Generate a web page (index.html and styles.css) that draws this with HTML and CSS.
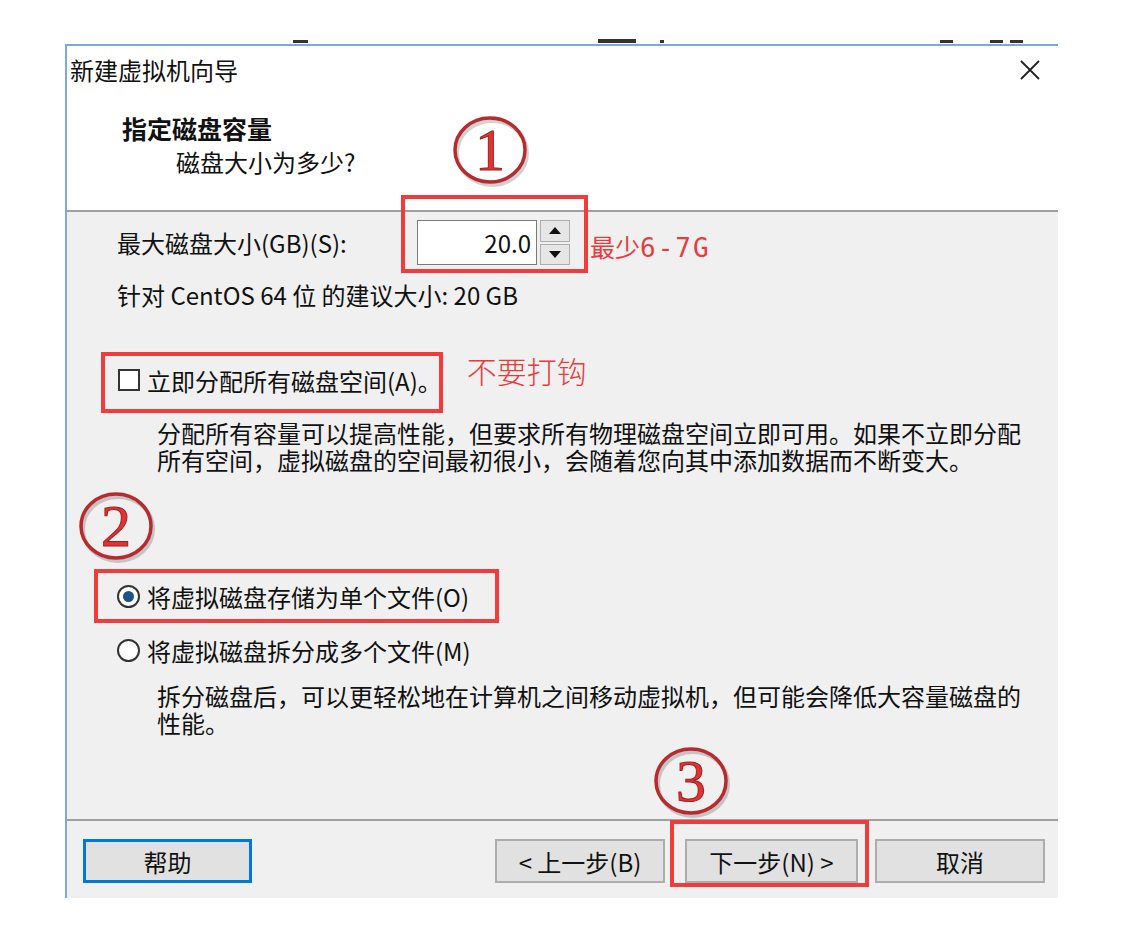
FILE: index.html
```html
<!DOCTYPE html>
<html lang="zh-CN">
<head>
    <meta charset="UTF-8">
    <meta name="viewport" content="width=device-width, initial-scale=1.0">
    <title>新建虚拟机向导</title>
    <link rel="stylesheet" href="styles.css">
</head>
<body>

<div class="backdrop">
    <span class="dash d1"></span>
    <span class="dash d2"></span>
    <span class="dash d3"></span>
    <span class="dash d4"></span>
    <span class="dash d5"></span>
    <span class="dash d6"></span>
</div>

<div class="window">
    <div class="titlebar">
        <span class="title">新建虚拟机向导</span>
        <svg class="close" width="22" height="22" viewBox="0 0 22 22">
            <path d="M2 2 L20 20 M20 2 L2 20" stroke="#222" stroke-width="1.8" fill="none"/>
        </svg>
    </div>

    <div class="header">
        <div class="heading">指定磁盘容量</div>
        <div class="subheading">磁盘大小为多少?</div>
    </div>

    <div class="content">
        <div class="size-row">
            <label class="size-label" for="size">最大磁盘大小(GB)(S):</label>
            <div class="spin">
                <div class="spin-field" id="size">20.0</div>
                <div class="spin-buttons">
                    <span class="spin-btn"><svg width="12" height="7" viewBox="0 0 12 7"><path d="M0 7 L6 0 L12 7Z"/></svg></span>
                    <span class="spin-btn"><svg width="12" height="7" viewBox="0 0 12 7"><path d="M0 0 L12 0 L6 7Z"/></svg></span>
                </div>
            </div>
            <span class="note note-min">最少<span class="mono">6-7G</span></span>
        </div>

        <div class="hint">针对 CentOS 64 位 的建议大小: 20 GB</div>

        <div class="option check-row">
            <span class="checkbox"></span>
            <span>立即分配所有磁盘空间(A)。</span>
            <span class="note note-check">不要打钩</span>
        </div>
        <p class="desc">分配所有容量可以提高性能，但要求所有物理磁盘空间立即可用。如果不立即分配所有空间，虚拟磁盘的空间最初很小，会随着您向其中添加数据而不断变大。</p>

        <div class="option radio-row first">
            <span class="radio checked"></span>
            <span>将虚拟磁盘存储为单个文件(O)</span>
        </div>
        <div class="option radio-row">
            <span class="radio"></span>
            <span>将虚拟磁盘拆分成多个文件(M)</span>
        </div>
        <p class="desc desc-split">拆分磁盘后，可以更轻松地在计算机之间移动虚拟机，但可能会降低大容量磁盘的性能。</p>
    </div>

    <div class="footer">
        <button class="btn btn-help">帮助</button>
        <div class="nav">
            <button class="btn">&lt; 上一步(B)</button>
            <button class="btn btn-next">下一步(N) &gt;</button>
            <button class="btn btn-cancel">取消</button>
        </div>
    </div>

    <!-- red annotations drawn over the dialog -->
    <svg class="circled c1" width="80" height="74" viewBox="0 0 80 74">
        <ellipse cx="41" cy="39" rx="35" ry="32" class="ring-shadow"/>
        <ellipse cx="39" cy="36" rx="35" ry="32" class="ring"/>
        <text x="39" y="56">1</text>
    </svg>
    <svg class="circled c2" width="80" height="74" viewBox="0 0 80 74">
        <ellipse cx="41" cy="39" rx="35" ry="32" class="ring-shadow"/>
        <ellipse cx="39" cy="36" rx="35" ry="32" class="ring"/>
        <text x="39" y="56">2</text>
    </svg>
    <svg class="circled c3" width="80" height="74" viewBox="0 0 80 74">
        <ellipse cx="41" cy="39" rx="35" ry="32" class="ring-shadow"/>
        <ellipse cx="39" cy="36" rx="35" ry="32" class="ring"/>
        <text x="39" y="56">3</text>
    </svg>
    <div class="frame f1"></div>
    <div class="frame f2"></div>
    <div class="frame f3"></div>
    <div class="frame f4"></div>
</div>

</body>
</html>
```

FILE: styles.css
```css
body {
    margin: 0;
    background: #fff;
    font-family: "Noto Sans CJK SC", sans-serif;
    font-size: 24px;
    color: #111;
}
.backdrop {
    height: 44px;
    display: flex;
    align-items: flex-end;
    padding-bottom: 1px;
    box-sizing: border-box;
}
.dash {
    display: block;
    height: 3px;
    width: 13px;
    background: #333;
}
.d1 { margin-left: 293px; width: 15px; }
.d2 { margin-left: 290px; width: 38px; height: 4px; }
.d3 { margin-left: 24px; width: 4px; }
.d4 { margin-left: 276px; }
.d5 { margin-left: 37px; }
.d6 { margin-left: 7px; }

.window {
    position: relative;
    margin-left: 65px;
    width: 991px;
    height: 852px;
    border-top: 2px solid #7ea7dc;
    border-left: 2px solid #7ea7dc;
    background: #f0f0f0;
    display: flex;
    flex-direction: column;
}
.titlebar {
    height: 48px;
    flex: none;
    background: #fff;
    display: flex;
    align-items: center;
    justify-content: space-between;
    padding: 0 17px 0 3px;
}
.title {
    line-height: 30px;
}
.header {
    flex: none;
    height: 97px;
    padding-top: 19px;
    background: #fff;
    border-bottom: 2px solid #a0a0a0;
}
.heading {
    font-size: 25px;
    font-weight: bold;
    line-height: 30px;
    padding-left: 55px;
}
.subheading {
    margin-top: 4px;
    line-height: 30px;
    padding-left: 109px;
}

.content {
    flex: 1;
    padding: 8px 0 0 50px;
}
.size-row {
    display: flex;
    align-items: center;
    height: 45px;
}
.size-label {
    width: 300px;
}
.spin {
    display: flex;
    gap: 3px;
    height: 45px;
}
.spin-field {
    width: 120px;
    box-sizing: border-box;
    border: 1px solid #7a7a7a;
    background: #fff;
    text-align: right;
    padding-right: 5px;
    line-height: 43px;
}
.spin-buttons {
    width: 30px;
    display: flex;
    flex-direction: column;
    gap: 2px;
}
.spin-btn {
    flex: 1;
    border: 1px solid #adadad;
    background: #e6e6e6;
    display: flex;
    align-items: center;
    justify-content: center;
}
.spin-btn svg {
    fill: #111;
}
.note {
    color: #e83c3c;
}
.note-min {
    margin-left: 20px;
    margin-top: 6px;
    font-size: 25px;
}
.mono {
    font-family: "DejaVu Sans Mono", monospace;
    font-size: 26px;
    letter-spacing: 2px;
}
.hint {
    margin-top: 15px;
    line-height: 30px;
}
.option {
    display: flex;
    align-items: center;
    gap: 7px;
    height: 30px;
}
.check-row {
    margin-top: 55px;
}
.checkbox {
    width: 22px;
    height: 22px;
    box-sizing: border-box;
    margin-left: 1px;
    border: 2px solid #333;
    background: #fff;
}
.note-check {
    align-self: flex-start;
    margin-top: -10px;
    margin-left: 18px;
    font-size: 30px;
    font-weight: 300;
    line-height: 30px;
}
.desc {
    margin: 24px 0 0 40px;
    max-width: 875px;
    line-height: 27px;
}
.radio-row {
    margin-top: 24px;
}
.radio-row.first {
    margin-top: 108px;
}
.radio {
    width: 23px;
    height: 23px;
    box-sizing: border-box;
    border: 2px solid #333;
    border-radius: 50%;
    background: #fff;
    display: flex;
    align-items: center;
    justify-content: center;
}
.radio.checked::after {
    content: "";
    width: 11px;
    height: 11px;
    border-radius: 50%;
    background: #1f5189;
}
.desc-split {
    margin-top: 17px;
}

.footer {
    flex: none;
    height: 79px;
    box-sizing: border-box;
    border-top: 2px solid #a0a0a0;
    padding: 18px 13px 0 16px;
    display: flex;
    align-items: flex-start;
}
.nav {
    margin-left: auto;
    display: flex;
    gap: 20px;
}
.btn {
    width: 170px;
    height: 44px;
    border: 2px solid #adadad;
    background: #e1e1e1;
    font-family: inherit;
    font-size: 24px;
    color: #111;
    padding: 0;
}
.btn-help {
    width: 169px;
    border: 3px solid #0078d7;
}
.btn-next {
    width: 173px;
}
.btn-cancel {
    margin-left: -3px;
}

.circled {
    position: absolute;
}
.circled .ring {
    fill: none;
    stroke: #b82a2e;
    stroke-width: 3.5;
}
.circled .ring-shadow {
    fill: none;
    stroke: #000;
    stroke-opacity: 0.18;
    stroke-width: 4;
}
.circled text {
    font-family: "Liberation Serif", serif;
    font-size: 60px;
    text-anchor: middle;
    fill: #e03434;
    stroke: #9c1f22;
    stroke-width: 1;
}
.c1 { left: 384px; top: 68px; }
.c2 { left: 10px; top: 444px; }
.c3 { left: 585px; top: 699px; }

.frame {
    position: absolute;
    box-sizing: border-box;
    border: 4px solid #f23b3b;
}
.f1 { left: 334px; top: 149px; width: 187px; height: 78px; }
.f2 { left: 34px; top: 306px; width: 342px; height: 61px; }
.f3 { left: 27px; top: 523px; width: 405px; height: 54px; }
.f4 { left: 603px; top: 774px; width: 199px; height: 67px; }
```
